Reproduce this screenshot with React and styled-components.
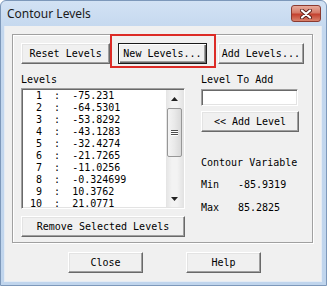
import styled, { createGlobalStyle, css } from 'styled-components'

const Global = createGlobalStyle`
  body { margin: 0; background: #fff; }
`

const mono = `"DejaVu Sans Mono", monospace`

const Window = styled.div`
  box-sizing: border-box;
  width: 327px;
  height: 286px;
  display: flex;
  flex-direction: column;
  border: 1px solid #7d98ba;
  border-radius: 6px 6px 0 0;
  background: linear-gradient(#d2e2f4, #c3d7ee 30px, #c0d5ed);
  overflow: hidden;
`
const TitleBar = styled.div`
  height: 25px;
  display: flex;
  align-items: flex-start;
  justify-content: space-between;
  padding-left: 6px;
`
const Title = styled.span`
  font: 12px "Noto Sans", "Open Sans", sans-serif;
  color: #1b1b1b;
  margin-top: 4px;
  line-height: 17px;
`
const CloseBtn = styled.div`
  box-sizing: border-box;
  width: 30px;
  height: 17px;
  margin: 4px 5px 0 0;
  border: 1px solid #8b3a30;
  border-radius: 3px;
  background: linear-gradient(#e7ab9c, #d57a68 45%, #c4412f 55%, #d9826c);
  display: flex;
  align-items: center;
  justify-content: center;
`
const Client = styled.div`
  flex: 1;
  margin: 0 4px 3px 3px;
  background: #f0f0f0;
  border: 1px solid #e4ebf4;
  border-top: none;
  display: flex;
  flex-direction: column;
`
const Group = styled.div`
  box-sizing: border-box;
  width: 301px;
  height: 209px;
  margin: 8px 0 0 7px;
  padding: 8px;
  border: 1px solid #a0a0a0;
  box-shadow: inset 1px 1px #fff, 1px 1px #fff;
`
const ButtonRow = styled.div`
  display: flex;
`
const Btn = styled.button`
  box-sizing: border-box;
  position: relative;
  width: ${p => p.$w}px;
  height: 21px;
  margin-left: ${p => p.$ml || 0}px;
  padding: 0;
  font: 10px ${mono};
  color: #000;
  background: #f0f0f0;
  border: 1px solid;
  border-color: #fff #696969 #696969 #fff;
  box-shadow: inset -1px -1px #a0a0a0, inset 1px 1px #e3e3e3;
  ${p => p.$default && css`
    border: 1px solid #1a1a1a;
    box-shadow: inset 1px 1px #fff, inset -1px -1px #696969, inset -2px -2px #a0a0a0;
  `}
`
const Highlight = styled.span`
  position: absolute;
  top: -10px;
  left: -9px;
  right: -10px;
  bottom: -5px;
  border: 2px solid #dc2b26;
  pointer-events: none;
`
const Columns = styled.div`
  display: flex;
  gap: 16px;
  margin-top: 10px;
`
const LeftCol = styled.div`
  width: 164px;
  display: flex;
  flex-direction: column;
`
const RightCol = styled.div`
  width: 98px;
  display: flex;
  flex-direction: column;
`
const Label = styled.div`
  font: 10px ${mono};
  line-height: 12px;
  color: #000;
  white-space: pre;
  margin-top: ${p => p.$mt || 0}px;
`
const ListBox = styled.div`
  box-sizing: border-box;
  height: 121px;
  margin-top: 2px;
  display: flex;
  background: #fff;
  border: 1px solid;
  border-color: #a0a0a0 #fff #fff #a0a0a0;
  box-shadow: inset 1px 1px #696969, inset -1px -1px #e3e3e3;
  padding: 1px;
  overflow: hidden;
`
const Rows = styled.div`
  flex: 1;
  padding-left: 1px;
  overflow: hidden;
`
const Row = styled.div`
  font: 10px ${mono};
  line-height: 12px;
  height: 12px;
  white-space: pre;
  color: #000;
`
const ScrollBar = styled.div`
  width: 17px;
  display: flex;
  flex-direction: column;
  background: linear-gradient(90deg, #e4e4e4, #f3f3f3 35%, #f3f3f3 65%, #e4e4e4);
`
const Arrow = styled.div`
  height: 17px;
  display: flex;
  align-items: center;
  justify-content: center;
`
const Track = styled.div`
  flex: 1;
  padding: 1px 1px 0;
`
const Thumb = styled.div`
  box-sizing: border-box;
  height: 49px;
  border: 1px solid #979797;
  border-radius: 2px;
  background: linear-gradient(90deg, #f4f4f4, #e9e9e9 50%, #d9d9d9);
  display: flex;
  flex-direction: column;
  align-items: center;
  justify-content: center;
  gap: 1px;
`
const Grip = styled.div`
  width: 7px;
  height: 1px;
  background: #4e4e4e;
  box-shadow: 0 1px #fff;
`
const Input = styled.div`
  box-sizing: border-box;
  width: 97px;
  height: 17px;
  margin-top: 3px;
  background: #fff;
  border: 1px solid;
  border-color: #a0a0a0 #fff #fff #a0a0a0;
  box-shadow: inset 1px 1px #696969, inset -1px -1px #e3e3e3;
`
const Stats = styled.div`
  display: grid;
  grid-template-columns: 37px auto;
  row-gap: 11px;
  margin-top: 10px;
  font: 10px ${mono};
  line-height: 12px;
  color: #000;
`
const Footer = styled.div`
  display: flex;
  justify-content: center;
  gap: 43px;
  margin-top: 9px;
  padding-left: 3px;
`

const levels = [
  -75.231, -64.5301, -53.8292, -43.1283, -32.4274,
  -21.7265, -11.0256, -0.324699, 10.3762, 21.0771,
]

const Tri = ({ down }) => (
  <svg width="7" height="4" viewBox="0 0 7 4">
    <path d={down ? 'M0 0H7L3.5 4Z' : 'M0 4H7L3.5 0Z'} fill="#222" />
  </svg>
)

export default function App() {
  return (
    <>
      <Global />
      <Window>
        <TitleBar>
          <Title>Contour Levels</Title>
          <CloseBtn>
            <svg width="12" height="10" viewBox="0 0 12 10">
              <path d="M2 1.5L10 8.5M10 1.5L2 8.5" stroke="#5a1f18" strokeWidth="4" strokeLinecap="round" />
              <path d="M2 1.5L10 8.5M10 1.5L2 8.5" stroke="#fff" strokeWidth="2.2" strokeLinecap="round" />
            </svg>
          </CloseBtn>
        </TitleBar>
        <Client>
          <Group>
            <ButtonRow>
              <Btn $w={90}>Reset Levels</Btn>
              <Btn $w={89} $ml={8} $default>
                New Levels...
                <Highlight />
              </Btn>
              <Btn $w={87} $ml={11}>Add Levels...</Btn>
            </ButtonRow>
            <Columns>
              <LeftCol>
                <Label>Levels</Label>
                <ListBox>
                  <Rows>
                    {levels.map((v, i) => (
                      <Row key={i}>{`${String(i + 1).padStart(3)}  :  ${v}`}</Row>
                    ))}
                  </Rows>
                  <ScrollBar>
                    <Arrow><Tri /></Arrow>
                    <Track>
                      <Thumb>
                        <Grip />
                        <Grip />
                        <Grip />
                      </Thumb>
                    </Track>
                    <Arrow><Tri down /></Arrow>
                  </ScrollBar>
                </ListBox>
                <Btn $w={164} style={{ marginTop: 7 }}>Remove Selected Levels</Btn>
              </LeftCol>
              <RightCol>
                <Label>Level To Add</Label>
                <Input />
                <Btn $w={98} style={{ marginTop: 5 }}>{'<< Add Level'}</Btn>
                <Label $mt={25}>Contour Variable</Label>
                <Stats>
                  <span>Min</span><span>-85.9319</span>
                  <span>Max</span><span>85.2825</span>
                </Stats>
              </RightCol>
            </Columns>
          </Group>
          <Footer>
            <Btn $w={75}>Close</Btn>
            <Btn $w={75}>Help</Btn>
          </Footer>
        </Client>
      </Window>
    </>
  )
}
